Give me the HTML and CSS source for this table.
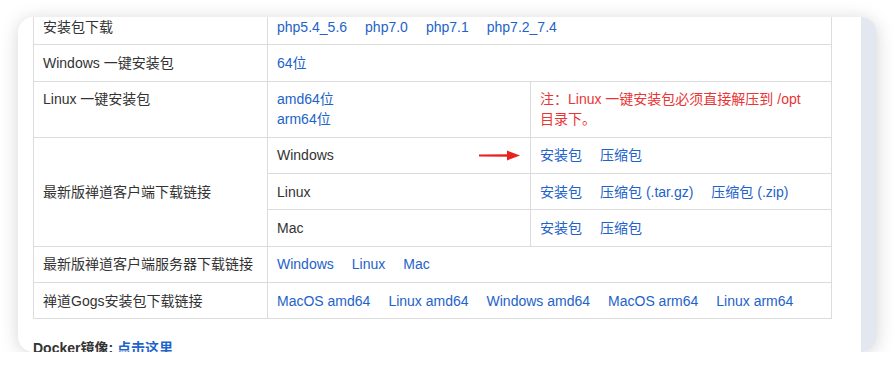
FILE: index.html
```html
<!DOCTYPE html>
<html lang="zh">
<head>
<meta charset="utf-8">
<link rel="stylesheet" href="styles.css">
</head>
<body>
<div class="card">
  <div class="content">
    <table class="dl">
      <colgroup><col class="c1"><col class="c2"><col class="c3"></colgroup>
      <tr>
        <td>安装包下载</td>
        <td colspan="2"><a href="#">php5.4_5.6</a><a href="#">php7.0</a><a href="#">php7.1</a><a href="#">php7.2_7.4</a></td>
      </tr>
      <tr>
        <td>Windows 一键安装包</td>
        <td colspan="2"><a href="#">64位</a></td>
      </tr>
      <tr>
        <td>Linux 一键安装包</td>
        <td><a href="#">amd64位</a><br><a href="#">arm64位</a></td>
        <td class="note">注：Linux 一键安装包必须直接解压到 /opt<br>目录下。</td>
      </tr>
      <tr>
        <td rowspan="3" class="mid">最新版禅道客户端下载链接</td>
        <td class="arrow-cell">Windows
          <svg class="arrow" width="42" height="11" viewBox="0 0 42 11"><path d="M0 4.6 L29 4.3 L29 6.7 L0 6.4 Z" fill="#e8231f"/><path d="M28 0.5 L41 5.5 L28 10.5 Z" fill="#e8231f"/></svg>
        </td>
        <td><a href="#">安装包</a><a href="#">压缩包</a></td>
      </tr>
      <tr>
        <td>Linux</td>
        <td><a href="#">安装包</a><a href="#">压缩包 (.tar.gz)</a><a href="#">压缩包 (.zip)</a></td>
      </tr>
      <tr>
        <td>Mac</td>
        <td><a href="#">安装包</a><a href="#">压缩包</a></td>
      </tr>
      <tr>
        <td>最新版禅道客户端服务器下载链接</td>
        <td colspan="2"><a href="#">Windows</a><a href="#">Linux</a><a href="#">Mac</a></td>
      </tr>
      <tr>
        <td>禅道Gogs安装包下载链接</td>
        <td colspan="2"><a href="#">MacOS amd64</a><a href="#">Linux amd64</a><a href="#">Windows amd64</a><a href="#">MacOS arm64</a><a href="#">Linux arm64</a></td>
      </tr>
    </table>
    <p class="docker">Docker镜像: <a href="#">点击这里</a></p>
  </div>
  <div class="track"></div>
</div>
</body>
</html>
```
FILE: styles.css
```css
html, body {
  margin: 0;
  padding: 0;
  background: #ffffff;
}
body {
  font-family: "Liberation Sans", "Noto Sans CJK SC", sans-serif;
  font-size: 14px;
  color: #333333;
  padding: 17px 18px 0 18px;
}
.card {
  width: 859px;
  height: 335px;
  border-radius: 16px;
  overflow: hidden;
  display: flex;
  box-shadow: 0 2px 18px rgba(0, 0, 0, 0.17);
}
.content {
  flex: 1;
  background: #ffffff;
  padding-left: 15px;
  overflow: hidden;
}
.track {
  width: 16px;
  background: #e3e7ef;
}
.dl {
  border-collapse: collapse;
  table-layout: fixed;
  width: 798px;
  margin-top: -9px;
}
.c1 { width: 234px; }
.c2 { width: 263px; }
.c3 { width: 301px; }
.dl td {
  border: 1px solid #dcdcdc;
  padding: 7.65px 9px;
  line-height: 20px;
  vertical-align: top;
}
.dl td.mid {
  vertical-align: middle;
}
.dl a {
  color: #1d63c9;
  text-decoration: none;
  margin-right: 18px;
}
.dl a:last-child {
  margin-right: 0;
}
.note {
  color: #ea3535;
}
.arrow-cell {
  position: relative;
}
.arrow {
  position: absolute;
  right: 9px;
  top: 12px;
}
.docker {
  margin: 19px 0 0 0;
  font-weight: bold;
  line-height: 20px;
  color: #333333;
}
.docker a {
  color: #1d63c9;
  text-decoration: none;
}
```
